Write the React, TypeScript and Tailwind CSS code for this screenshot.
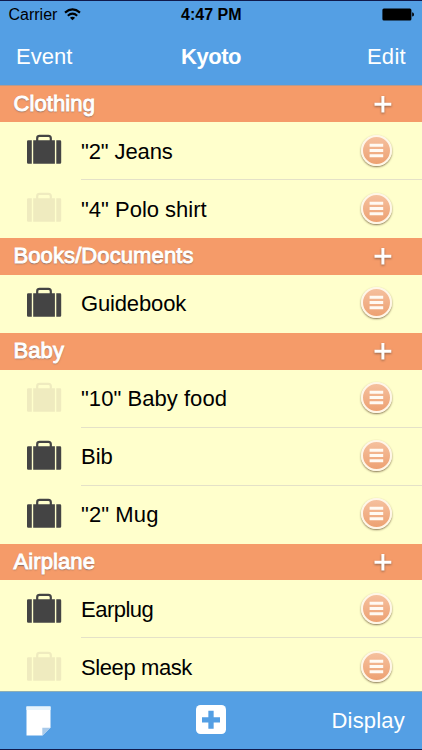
type Item = { name: string; packed: boolean; tracking?: string };
type Section = { title: string; items: Item[]; height: string };

const sections: Section[] = [
  {
    title: "Clothing",
    height: "h-[36px]",
    items: [
      { name: '"2" Jeans', packed: true, tracking: "tracking-[-0.1px]" },
      { name: '"4" Polo shirt', packed: false },
    ],
  },
  {
    title: "Books/Documents",
    height: "h-[36.7px]",
    items: [{ name: "Guidebook", packed: true, tracking: "tracking-[-0.15px]" }],
  },
  {
    title: "Baby",
    height: "h-[37px]",
    items: [
      { name: '"10" Baby food', packed: false, tracking: "tracking-[0.05px]" },
      { name: "Bib", packed: true },
      { name: '"2" Mug', packed: true, tracking: "tracking-[0.1px]" },
    ],
  },
  {
    title: "Airplane",
    height: "h-[36.6px]",
    items: [
      { name: "Earplug", packed: true, tracking: "tracking-[-0.5px]" },
      { name: "Sleep mask", packed: false, tracking: "tracking-[-0.4px]" },
    ],
  },
];

function Suitcase({ packed }: { packed: boolean }) {
  return (
    <svg width="36" height="30" viewBox="0 0 36 30" className={packed ? "text-[#444444]" : "text-[#efebbf]"}>
      <path d="M10.2 7V4.2Q10.2 1.8 12.6 1.8H21.4Q23.8 1.8 23.8 4.2V7" fill="none" stroke="currentColor" strokeWidth="2.2" />
      <path d="M1.2 6.3H4.8V29.7H1.2Q0 29.7 0 28.5V7.5Q0 6.3 1.2 6.3ZM6.2 6.3H27.9V29.7H6.2ZM29.3 6.3H33Q34.2 6.3 34.2 7.5V28.5Q34.2 29.7 33 29.7H29.3Z" fill="currentColor" />
    </svg>
  );
}

function MenuButton() {
  return (
    <button className="mb-px size-[31px] shrink-0 rounded-full border-2 border-[#fff6e8] bg-linear-to-b from-[#f5c09e] to-[#eda172] shadow-[0_1px_2px_rgba(70,45,20,0.65)]">
      <svg width="27" height="27" viewBox="0 0 27 27">
        <path d="M6.6 8.3H20.2M6.6 13.5H20.2M6.6 18.7H20.2" stroke="#fffaf3" strokeWidth="2.9" />
      </svg>
    </button>
  );
}

function SectionHeader({ title, height }: { title: string; height: string }) {
  return (
    <div className={`flex shrink-0 items-center justify-between bg-[#f59b69] pl-[13.5px] pr-[29px] text-white ${height}`}>
      <h2 className="text-[22px] leading-[26px] tracking-[0.1px] [-webkit-text-stroke:0.95px_white] [text-shadow:0_1px_1.5px_rgba(70,70,80,0.75)]">
        {title}
      </h2>
      <svg width="20" height="20" viewBox="0 0 20 20" className="drop-shadow-[0_1px_1px_rgba(80,60,50,0.6)]">
        <path d="M1.5 10.3H18.3M9.9 2.1V18.5" stroke="white" strokeWidth="3" />
      </svg>
    </div>
  );
}

function Row({ item, divided }: { item: Item; divided: boolean }) {
  return (
    <div className="flex h-[58px] shrink-0 pl-[27px]">
      <div className="w-[54px] shrink-0 pt-[12.4px]">
        <Suitcase packed={item.packed} />
      </div>
      <div className={`flex flex-1 items-center justify-between border-b pr-[30px] ${divided ? "border-[#e4e1c8]" : "border-transparent"}`}>
        <span className={`pt-[2px] text-[22px] leading-[26px] text-black ${item.tracking ?? ""}`}>{item.name}</span>
        <MenuButton />
      </div>
    </div>
  );
}

export default function App() {
  return (
    <div className="flex h-[750px] w-[422px] flex-col overflow-hidden bg-[#ffffcc] font-['Liberation_Sans',Arial,sans-serif]">
      <header className="h-[86px] shrink-0 border-b border-t border-b-[#b69a8e] border-t-[#101a4c] bg-[#549fe4]">
        <div className="grid h-[27px] grid-cols-3 items-center pl-[8.5px] pr-[8px] text-black">
          <div className="flex items-center gap-[7px]">
            <span className="text-[16px]">Carrier</span>
            <svg width="17" height="13" viewBox="0 0 17 13">
              <g fill="none" stroke="currentColor" strokeWidth="2.1">
                <path d="M1 4.6Q8.5-1.8 16 4.6" />
                <path d="M3.8 7.7Q8.5 3.7 13.2 7.7" />
              </g>
              <path d="M8.5 12.3L5.9 9.7Q8.5 7.8 11.1 9.7Z" fill="currentColor" />
            </svg>
          </div>
          <span className="whitespace-nowrap text-center text-[16px] font-bold">4:47 PM</span>
          <svg width="32" height="13" viewBox="0 0 32 13" className="justify-self-end">
            <rect x="0.4" y="0.4" width="29" height="12" rx="1.5" fill="black" />
            <path d="M30.2 4.2Q32 4.5 32 6.4T30.2 8.6Z" fill="black" />
          </svg>
        </div>
        <nav className="grid h-[57px] grid-cols-3 items-center px-4 text-[22px] text-white">
          <button className="text-left">Event</button>
          <h1 className="text-center text-[22px] font-bold tracking-[-0.5px]">Kyoto</h1>
          <button className="text-right tracking-[0.3px]">Edit</button>
        </nav>
      </header>
      <main className="flex h-[605px] shrink-0 flex-col overflow-hidden">
        {sections.map((section) => (
          <section key={section.title} className="shrink-0">
            <SectionHeader title={section.title} height={section.height} />
            {section.items.map((item, i) => (
              <Row key={item.name} item={item} divided={i < section.items.length - 1} />
            ))}
          </section>
        ))}
      </main>
      <footer className="grid flex-1 grid-cols-3 items-center border-b border-t border-b-[#101a4c] border-t-[#8eaeb4] bg-[#549fe4] pl-[26px] pr-[17px] text-white">
        <svg width="25" height="30" viewBox="0 0 25 30">
          <path d="M.5.5H24.5V21.5L16.5 29.5H.5Z" fill="white" />
          <path d="M.5.5H24.5V4H.5Z" fill="#e8f4fc" />
          <path d="M16.3 21.8H24.5L16.3 29.5Z" fill="#a9caea" />
        </svg>
        <svg width="30" height="30" viewBox="0 0 30 30" className="-mt-px ml-[43.5px]">
          <rect width="30" height="29" rx="4.5" fill="white" />
          <path d="M6 14.8H24M15 5.8V23.8" stroke="#549fe4" strokeWidth="5.3" />
        </svg>
        <button className="text-right text-[22px] tracking-[0.2px]">Display</button>
      </footer>
    </div>
  );
}
